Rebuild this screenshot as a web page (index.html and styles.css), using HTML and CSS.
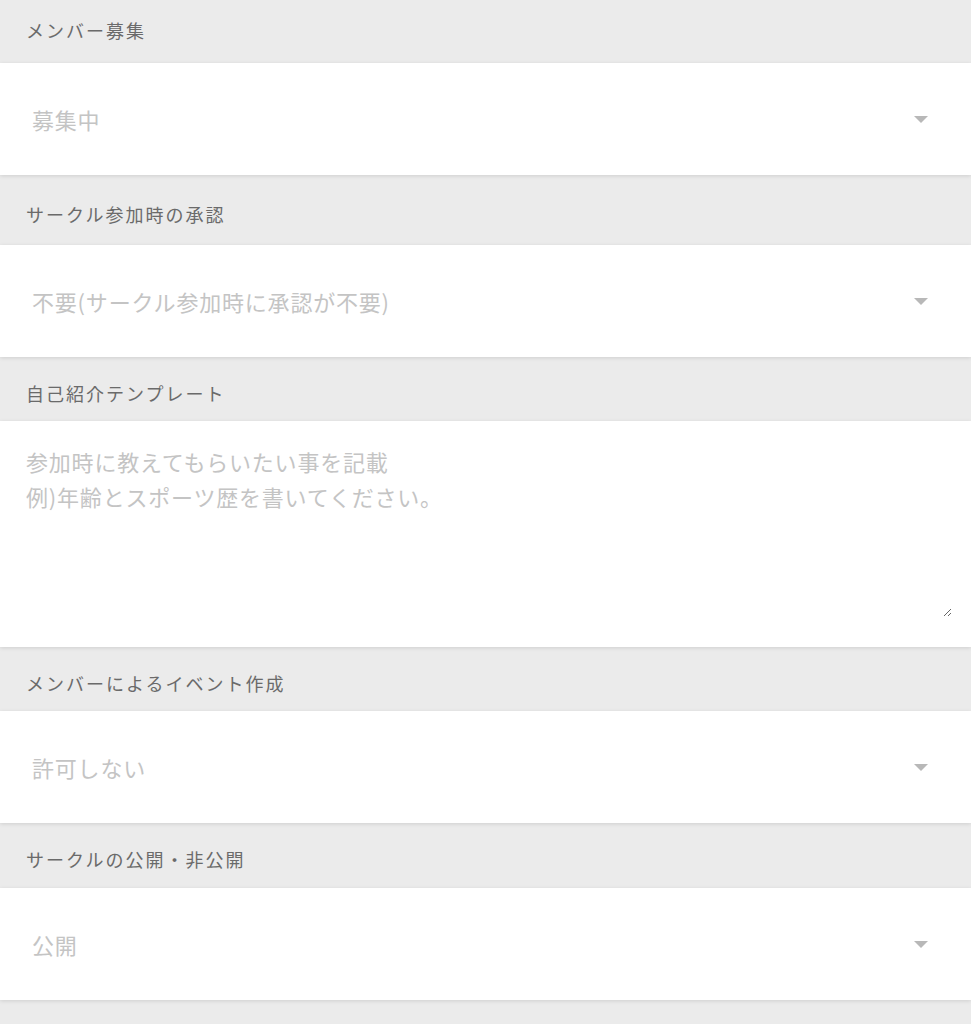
FILE: index.html
```html
<!DOCTYPE html>
<html lang="ja">
<head>
    <meta charset="UTF-8">
    <meta name="viewport" content="width=device-width, initial-scale=1.0">
    <title>サークル設定</title>
    <link rel="stylesheet" href="styles.css">
</head>
<body>

    <!-- メンバー募集 -->
    <div class="field-label first">メンバー募集</div>
    <div class="field-box select-box">
        <span>募集中</span>
        <svg class="arrow" width="14" height="7" viewBox="0 0 14 7"><path d="M0 0h14L7 7z"/></svg>
    </div>

    <!-- 承認 -->
    <div class="field-label tall">サークル参加時の承認</div>
    <div class="field-box select-box">
        <span>不要(サークル参加時に承認が不要)</span>
        <svg class="arrow" width="14" height="7" viewBox="0 0 14 7"><path d="M0 0h14L7 7z"/></svg>
    </div>

    <!-- 自己紹介 -->
    <div class="field-label">自己紹介テンプレート</div>
    <div class="field-box text-box">
        <textarea placeholder="参加時に教えてもらいたい事を記載&#10;例)年齢とスポーツ歴を書いてください。"></textarea>
    </div>

    <!-- イベント作成 -->
    <div class="field-label">メンバーによるイベント作成</div>
    <div class="field-box select-box">
        <span>許可しない</span>
        <svg class="arrow" width="14" height="7" viewBox="0 0 14 7"><path d="M0 0h14L7 7z"/></svg>
    </div>

    <!-- 公開設定 -->
    <div class="field-label last">サークルの公開・非公開</div>
    <div class="field-box select-box">
        <span>公開</span>
        <svg class="arrow" width="14" height="7" viewBox="0 0 14 7"><path d="M0 0h14L7 7z"/></svg>
    </div>

    <div class="field-label">&nbsp;</div>

</body>
</html>
```

FILE: styles.css
```css
body {
    margin: 0;
    padding: 0;
    background: #ebebeb;
    font-family: "Noto Sans CJK JP", "Noto Sans", sans-serif;
}

.field-label {
    display: flex;
    align-items: center;
    box-sizing: border-box;
    height: 64px;
    padding: 7px 26px 0;
    background: #ebebeb;
    color: #6a6a6a;
    font-size: 18px;
    letter-spacing: 2px;
}

.field-label.first {
    height: 63px;
    padding: 0 26px 4px;
}

.field-label.tall {
    height: 70px;
}

.field-label.last {
    height: 65px;
}

.field-box {
    position: relative;
    z-index: 1;
    background: #fff;
    box-shadow: 0 1px 4px rgba(0, 0, 0, 0.12);
}

.select-box {
    display: flex;
    align-items: center;
    justify-content: space-between;
    height: 112px;
    padding: 0 43px 0 32px;
    color: #c4c4c4;
    font-size: 22px;
    letter-spacing: 0.8px;
}

.arrow {
    fill: #b8b8b8;
}

.text-box {
    height: 226px;
    box-sizing: border-box;
    padding: 21px 19px 29px 24px;
}

.text-box textarea {
    display: block;
    width: 100%;
    height: 175px;
    box-sizing: border-box;
    padding: 2px;
    border: none;
    outline: none;
    font-family: "Noto Sans CJK JP", "Noto Sans", sans-serif;
    font-size: 22px;
    letter-spacing: 0.8px;
    line-height: 35px;
    color: #555;
}

.text-box textarea::placeholder {
    color: #c4c4c4;
}
```
